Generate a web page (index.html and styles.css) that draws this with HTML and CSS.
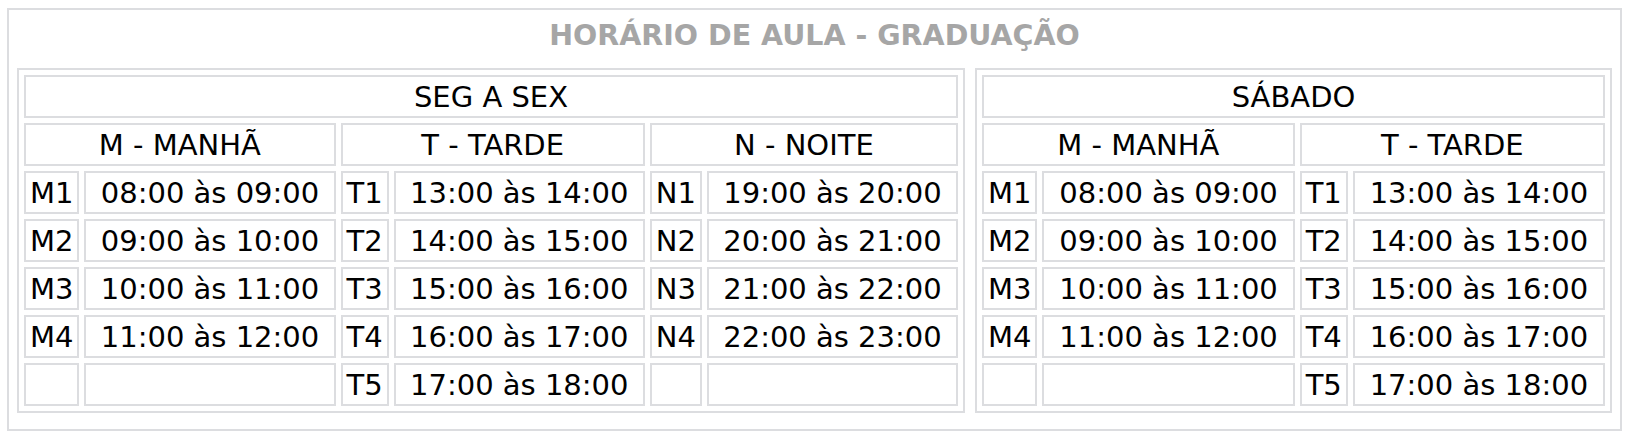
FILE: index.html
```html
<!DOCTYPE html>
<html lang="pt-BR">
<head>
<meta charset="utf-8">
<title>Horário de Aula - Graduação</title>
<link rel="stylesheet" href="styles.css">
</head>
<body>
<div class="panel">
  <h1 class="title">HORÁRIO DE AULA - GRADUAÇÃO</h1>
  <div class="tables">
    <table class="sched sched-week">
      <tr><td colspan="6">SEG A SEX</td></tr>
      <tr><td colspan="2">M - MANHÃ</td><td colspan="2">T - TARDE</td><td colspan="2">N - NOITE</td></tr>
      <tr><td class="lbl">M1</td><td>08:00 às 09:00</td><td class="lbl">T1</td><td>13:00 às 14:00</td><td class="lbl">N1</td><td>19:00 às 20:00</td></tr>
      <tr><td class="lbl">M2</td><td>09:00 às 10:00</td><td class="lbl">T2</td><td>14:00 às 15:00</td><td class="lbl">N2</td><td>20:00 às 21:00</td></tr>
      <tr><td class="lbl">M3</td><td>10:00 às 11:00</td><td class="lbl">T3</td><td>15:00 às 16:00</td><td class="lbl">N3</td><td>21:00 às 22:00</td></tr>
      <tr><td class="lbl">M4</td><td>11:00 às 12:00</td><td class="lbl">T4</td><td>16:00 às 17:00</td><td class="lbl">N4</td><td>22:00 às 23:00</td></tr>
      <tr><td class="lbl"></td><td></td><td class="lbl">T5</td><td>17:00 às 18:00</td><td class="lbl"></td><td></td></tr>
    </table>
    <table class="sched sched-sat">
      <tr><td colspan="4">SÁBADO</td></tr>
      <tr><td colspan="2">M - MANHÃ</td><td colspan="2">T - TARDE</td></tr>
      <tr><td class="lbl">M1</td><td>08:00 às 09:00</td><td class="lbl">T1</td><td>13:00 às 14:00</td></tr>
      <tr><td class="lbl">M2</td><td>09:00 às 10:00</td><td class="lbl">T2</td><td>14:00 às 15:00</td></tr>
      <tr><td class="lbl">M3</td><td>10:00 às 11:00</td><td class="lbl">T3</td><td>15:00 às 16:00</td></tr>
      <tr><td class="lbl">M4</td><td>11:00 às 12:00</td><td class="lbl">T4</td><td>16:00 às 17:00</td></tr>
      <tr><td class="lbl"></td><td></td><td class="lbl">T5</td><td>17:00 às 18:00</td></tr>
    </table>
  </div>
</div>
</body>
</html>
```
FILE: styles.css
```css
body {
  margin: 8px 0 0 7px;
  font-family: "DejaVu Sans", Verdana, sans-serif;
  background: #ffffff;
  color: #000000;
}

.panel {
  width: 1615px;
  box-sizing: border-box;
  border: 2px solid #dcdde0;
  padding: 9px 8px 16px;
}

.title {
  margin: 0 0 15px;
  font-size: 28.5px;
  line-height: 34px;
  font-weight: bold;
  color: #a6a6a6;
  text-align: center;
}

.tables {
  display: flex;
  gap: 10px;
  align-items: flex-start;
}

.sched {
  border: 2px solid #dcdde0;
  border-collapse: separate;
  border-spacing: 5px;
  font-size: 29px;
  box-sizing: border-box;
}

.sched-week {
  width: 948px;
}

.sched-sat {
  width: 637px;
}

.sched td {
  border: 2px solid #dcdde0;
  padding: 3px 4px 1px;
  line-height: 35px;
  text-align: center;
  white-space: nowrap;
}

.sched td.lbl {
  width: 1%;
}
```
